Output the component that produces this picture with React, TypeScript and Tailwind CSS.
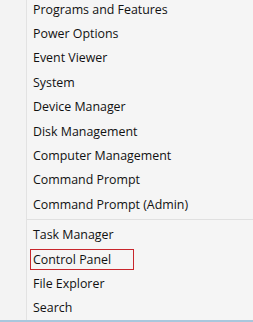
const GROUP_A = [
  'Programs and Features',
  'Power Options',
  'Event Viewer',
  'System',
  'Device Manager',
  'Disk Management',
  'Computer Management',
  'Command Prompt',
  'Command Prompt (Admin)',
]

const GROUP_B = ['Task Manager', 'Control Panel', 'File Explorer', 'Search']

function Item({ label, boxed }: { label: string; boxed?: boolean }) {
  return (
    <div className="h-[24.4px] flex items-center pl-[3px]">
      <span
        className={`pl-[2px] leading-[19px] border ${boxed ? 'border-[#c8262c] pr-[22px]' : 'border-transparent pr-[2px]'}`}
      >
        {label}
      </span>
    </div>
  )
}

export default function App() {
  return (
    <div
      className="w-[253px] h-[322px] overflow-hidden bg-[#f5f5f5] flex flex-col text-[12.4px] text-[#111111]"
      style={{ fontFamily: '"Open Sans", "Noto Sans", sans-serif' }}
    >
      <div className="flex flex-1 min-h-0">
        {/* left gutter */}
        <div className="w-[27px] shrink-0 bg-[#f3f3f3] border-r border-[#e2e2e2]" />

        {/* menu */}
        <div className="flex-1 flex flex-col -mt-[3px]">
          {GROUP_A.map((label) => (
            <Item key={label} label={label} />
          ))}
          <div className="h-[6px] flex items-center">
            <div className="w-full border-t border-[#e0e0e0]" />
          </div>
          {GROUP_B.map((label) => (
            <Item key={label} label={label} boxed={label === 'Control Panel'} />
          ))}
        </div>
      </div>
      <div className="h-[2px] bg-[#a9c7dd]" />
    </div>
  )
}
